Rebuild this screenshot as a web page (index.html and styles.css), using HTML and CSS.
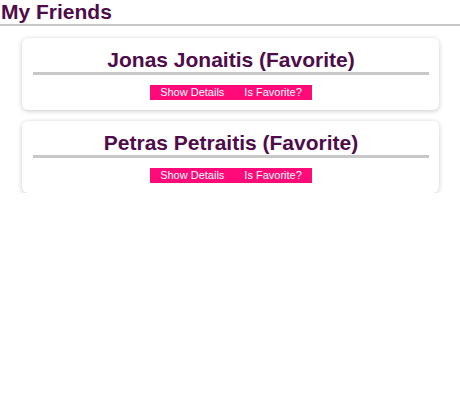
FILE: index.html
```html
<!DOCTYPE html>
<html>
<head>
<meta charset="utf-8">
<link rel="stylesheet" href="styles.css">
</head>
<body>
<header class="page-header">
  <h1 class="page-title">My Friends</h1>
</header>
<ul class="friends">
  <li class="friend-card">
    <h2 class="friend-name">Jonas Jonaitis (Favorite)</h2>
    <div class="actions">
      <button class="btn">Show Details</button><button class="btn">Is Favorite?</button>
    </div>
  </li>
  <li class="friend-card">
    <h2 class="friend-name">Petras Petraitis (Favorite)</h2>
    <div class="actions">
      <button class="btn">Show Details</button><button class="btn">Is Favorite?</button>
    </div>
  </li>
</ul>
</body>
</html>
```
FILE: styles.css
```css
html, body {
  margin: 0;
  padding: 0;
  background: #fff;
  font-family: "Liberation Sans", Arial, Helvetica, sans-serif;
  color: #4e0c4a;
}
.page-header {
  border-bottom: 2px solid #c8c8c8;
}
.page-title {
  margin: 0;
  padding: 0 1px;
  font-size: 21px;
  line-height: 24px;
  font-weight: bold;
}
.friends {
  list-style: none;
  margin: 0;
  padding: 12px 21px 0 22px;
  display: flex;
  flex-direction: column;
  gap: 11px;
}
.friend-card {
  background: #fff;
  border-radius: 6px;
  box-shadow: 0 1px 5px rgba(0, 0, 0, 0.22);
  padding: 10px 10px 10px 11px;
}
.friend-name {
  margin: 0 0 10px;
  font-size: 21px;
  line-height: 24px;
  font-weight: bold;
  text-align: center;
  border-bottom: 3px solid #c8c8c8;
}
.actions {
  display: flex;
  justify-content: center;
}
.btn {
  border: 0;
  margin: 0;
  background: #ff0a78;
  color: #fff;
  font-family: "Liberation Sans", Arial, Helvetica, sans-serif;
  font-size: 11px;
  line-height: 15px;
  height: 15px;
  padding: 0 10px;
  cursor: pointer;
}
```
